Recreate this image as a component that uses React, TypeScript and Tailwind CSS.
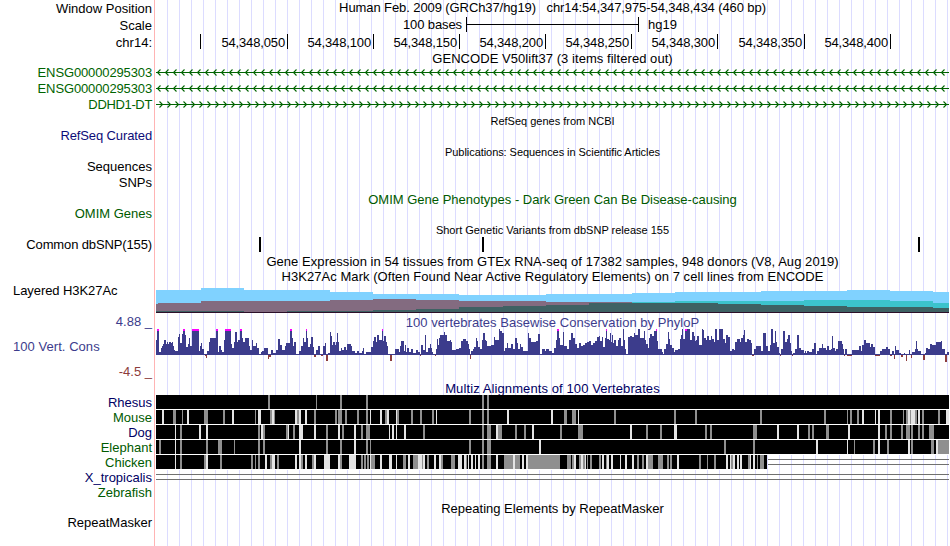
import React from 'react';

// every track is drawn in window pixels: the plot goes from x=156 to x=949
const LEFT = 156;
const WIDTH = 793;

type Run = [number, number];
type Mark = [number, number, string];

const ruler = ['54,348,050', '54,348,100', '54,348,150', '54,348,200', '54,348,250', '54,348,300', '54,348,350', '54,348,400'];
const rulerWidths = ['w-[87px]', 'w-[86px]', 'w-[86px]', 'w-[86px]', 'w-[86px]', 'w-[86px]', 'w-[87px]', 'w-[86px]'];

// [first x, top y] of each step, the step lasts until the next one
const h3k27ac: { color: string, steps: Run[] }[] = [
    { color: '#80d2ff', steps: [[156, 290], [201, 288], [244, 290], [330, 292], [373, 294], [459, 295], [546, 294], [632, 293], [675, 292], [761, 291], [847, 290], [890, 291], [933, 292]] },
    { color: '#3cc3cc', steps: [[156, 313], [632, 302], [675, 301], [804, 300], [890, 301], [933, 303]] },
    { color: '#836b80', steps: [[156, 304], [158, 303], [201, 301], [330, 300], [373, 299], [416, 300], [459, 301], [546, 302], [632, 313]] },
    { color: '#3e6163', steps: [[156, 311], [244, 312], [287, 311], [373, 310], [416, 309], [459, 307], [503, 306], [546, 305], [589, 303], [718, 304], [761, 305], [804, 306], [847, 307], [933, 308]] },
    { color: '#2c1028', steps: [[156, 312]] },
];

// x in thirds of a pixel from each block's origin, height in pixels; 27 is clipped at the top
const phyloP: { origin: number, runs: Run[] }[] = [
    {
        origin: 150,
        runs: [[18, 15], [21, 27], [27, 3], [33, 7], [36, 9], [39, 11], [42, 15], [48, 11], [51, 13], [54, 11], [57, 13], [63, 12], [66, 13], [69, 9], [72, 5], [75, 4], [84, 18], [87, 21], [90, 12], [96, 21], [99, 27], [105, 20], [108, 8], [114, 11], [117, 17], [120, 9], [126, 27], [147, 4], [150, 9], [153, 12], [156, 6], [162, 1], [165, -1], [168, -3], [171, 4], [177, 13], [180, 17], [198, 27], [204, 3], [207, 9], [213, 5], [216, 3], [222, 15], [225, 27], [243, 11], [246, 7], [252, 13], [255, 23], [261, 13], [264, 15], [270, 27], [276, 17], [279, 13], [285, 17], [297, 9], [300, 5], [306, 15], [309, 9], [318, 12], [321, 7], [327, 1], [333, 3], [336, 4], [342, 7], [354, -4], [357, -2], [363, 5], [369, 2], [378, 5], [384, 16], [390, 10], [396, 5], [405, 9], [408, 12], [420, 27], [426, 17], [429, 9], [432, 13], [438, 1], [447, 4], [453, 9], [459, 17], [462, 13], [468, 27], [471, 17], [474, 8], [480, 11], [483, 18], [489, 8], [492, -2], [498, 5], [504, 9], [510, 1], [513, -1], [519, 9], [525, 12], [528, -6], [534, 2], [540, 23], [543, 19], [546, 10], [549, 13], [555, 10], [558, 13], [561, 22], [564, 13], [567, 4], [573, 7], [576, 5], [582, 8], [588, 5], [591, 11], [603, 9], [606, 4], [615, 2], [621, 4], [627, 2], [636, 4], [639, 7], [642, 1], [648, 3], [663, 8], [669, 14], [672, 18], [678, 13], [681, 20], [687, 15], [696, 27], [699, 14], [702, 19], [708, 13], [711, 9], [714, 1], [720, -6], [726, 1], [735, 6], [747, 3], [750, 9], [753, 14], [762, 4], [765, 10], [768, 3], [771, 7], [777, 3], [783, 6], [789, 2], [798, 5], [804, 3]],
    },
    {
        origin: 420,
        runs: [[0, -1], [3, 10], [9, 5], [15, 20], [18, 3], [24, 7], [30, 11], [33, 7], [36, 3], [39, 1], [45, -1], [48, 6], [51, 16], [54, 10], [57, 17], [60, 20], [72, 23], [75, 20], [81, 14], [90, 15], [93, 13], [96, 5], [108, 6], [117, 7], [123, 14], [129, 16], [138, 14], [144, 11], [147, 6], [150, -4], [153, 4], [159, 6], [162, 8], [168, 17], [171, 14], [174, 8], [180, 6], [186, 15], [189, 22], [195, 15], [198, 14], [201, 9], [213, 10], [222, 18], [225, 15], [237, 26], [240, 24], [246, 22], [252, 4], [255, 7], [261, 12], [264, 7], [273, 11], [279, 6], [285, 17], [291, 12], [294, 6], [300, 11], [303, 8], [309, 4], [324, 22], [327, 17], [333, 13], [348, 14], [354, 21], [360, 1], [366, 6], [375, 4], [378, 6], [387, 4], [396, 2], [402, 7], [408, 15], [411, 27], [417, 17], [420, 10], [429, 23], [432, 9], [441, 6], [447, 15], [453, 22], [459, 17], [465, 11], [471, 7], [477, 12], [483, 9], [489, 10], [495, 12], [501, 13], [507, 14], [513, 10], [519, 12], [525, 14], [531, 18], [537, 19], [540, 14], [546, 18], [549, 8], [555, 17], [558, 27], [561, 16], [567, 15], [570, 22], [573, 13], [576, 20], [579, 12], [582, 15], [588, 9], [594, 15], [597, 17], [603, 9], [609, 26], [612, 15], [615, 6], [618, 1], [624, 18], [630, 19], [636, 18], [642, 22], [645, 20], [654, 26], [660, 17], [672, 24], [675, 15], [678, 11], [684, 7], [687, 17], [690, 21], [696, 19], [702, 24], [708, 27], [711, 14], [714, 6], [726, 3], [729, 1], [732, 6], [738, 11], [744, 23], [747, 16], [750, 10], [756, 7], [762, 3], [765, 5], [774, 6], [780, 16], [783, 20], [786, 26], [789, 16], [795, 27], [801, 26]],
    },
    {
        origin: 680,
        runs: [[21, 26], [30, 15], [36, 23], [42, 19], [45, 14], [48, 15], [51, 19], [57, 10], [66, 26], [69, 25], [72, 17], [78, 15], [81, 19], [87, 15], [93, 19], [96, 16], [102, 13], [105, 26], [111, 15], [117, 26], [129, 16], [135, 12], [138, 20], [144, 18], [150, 4], [156, 6], [162, 5], [165, 13], [171, 16], [180, 13], [183, 17], [189, 20], [192, 25], [195, 13], [201, 16], [207, 15], [213, 12], [216, -1], [222, 6], [228, 9], [243, 4], [249, 22], [258, 9], [264, 4], [270, 10], [273, 26], [279, 12], [285, 24], [288, 13], [291, 8], [297, 2], [300, -1], [303, 6], [309, 24], [315, 13], [321, 16], [324, 20], [330, 12], [333, 4], [336, -1], [339, 2], [345, 6], [351, 20], [357, 7], [363, 5], [372, 2], [375, 4], [378, 2], [381, 4], [387, 3], [396, 6], [402, 12], [408, 1], [411, 4], [417, 7], [426, 11], [429, 7], [438, 5], [441, 9], [447, 5], [453, 6], [456, 19], [459, 7], [465, 4], [468, 6], [474, 14], [486, 11], [489, 6], [492, -1], [495, 6], [501, -1], [516, 5], [537, 9], [543, 4], [546, 10], [552, 15], [558, 12], [570, 8], [573, 11], [579, 8], [585, -1], [600, 4], [606, 6], [618, 8], [624, 6], [630, -1], [636, 4], [642, -4], [645, 9], [648, 5], [657, 2], [663, -2], [669, 1], [672, 2], [675, 1], [678, -6], [681, 1], [687, 5], [690, 1], [693, -3], [696, 3], [705, 6], [708, 14], [711, 6], [714, 4], [723, 1], [729, -5], [735, 2], [738, 7], [744, 6], [750, 11], [756, 10], [768, 13], [783, 14], [786, 6], [795, -7], [801, 3], [807, 0]],
    },
];

const g = '#8f8f8f';
const w = '#e4e4e4';

// [x, width, shade] of every gap in a species' alignment
const species: { end: number, marks: Mark[] }[] = [
    { end: 949, marks: [[268, 2, g], [316, 1, g], [340, 2, g], [366, 2, g], [482, 2, g], [487, 2, g]] },
    {
        end: 949,
        marks: [[162, 2, w], [173, 3, g], [182, 1, g], [187, 2, w], [204, 4, g], [223, 2, g], [232, 2, w], [255, 1, g], [258, 3, w], [270, 2, g], [272, 2, w], [274, 1, g], [295, 2, w], [297, 2, g], [299, 2, w], [305, 2, w], [314, 2, g], [335, 2, g], [338, 4, g], [345, 2, g], [357, 2, g], [366, 2, g], [370, 1, w], [380, 2, w], [385, 2, g], [387, 2, w], [396, 1, w], [397, 2, g], [411, 2, g],
            [420, 2, g], [432, 2, g], [436, 1, w], [469, 2, g], [482, 2, g], [487, 2, g], [507, 2, w], [551, 2, w], [564, 3, g], [572, 4, g], [578, 1, w], [614, 2, g], [674, 2, g],
            [695, 2, g], [760, 2, g], [824, 2, g], [847, 1, g], [850, 2, g], [857, 2, g], [862, 2, w], [875, 1, w], [878, 2, w], [890, 2, g], [903, 1, g], [906, 2, g], [908, 2, w], [910, 1, g], [911, 4, w], [915, 2, g], [918, 2, w], [922, 2, g], [938, 2, g], [946, 3, w]],
    },
    {
        end: 949,
        marks: [[175, 1, w], [180, 2, g], [199, 2, w], [206, 2, w], [258, 2, g], [261, 2, w], [263, 2, g], [286, 2, g], [288, 1, w], [293, 2, g], [299, 4, w], [314, 2, w], [326, 2, g], [338, 2, w], [342, 2, g], [354, 2, w], [361, 2, g], [366, 4, g], [389, 1, w], [392, 2, w], [396, 1, w], [404, 2, w],
            [423, 2, g], [482, 2, g], [487, 4, g], [496, 2, w], [498, 4, g], [515, 2, g], [524, 2, g], [532, 2, w], [560, 2, g], [578, 5, g], [630, 2, w], [646, 2, g], [660, 2, g], [674, 3, w],
            [705, 2, g], [710, 2, g], [753, 4, g], [777, 2, w], [797, 2, w], [808, 2, g], [812, 2, g], [826, 3, g], [848, 2, w], [878, 2, w], [885, 2, g], [890, 2, g], [901, 2, g], [906, 4, g], [911, 2, g], [918, 2, g], [922, 2, g], [929, 5, g]],
    },
    {
        end: 949,
        marks: [[159, 2, g], [175, 1, w], [180, 2, g], [206, 2, g], [218, 4, g], [234, 1, g], [258, 2, g], [263, 2, g], [299, 2, w], [326, 2, g], [340, 2, g], [354, 2, w], [366, 2, g], [370, 1, g],
            [469, 2, g], [482, 2, g], [487, 4, g], [539, 2, w],
            [724, 2, g], [753, 2, g], [816, 2, w], [847, 1, w], [854, 1, g], [873, 2, g], [878, 2, w], [887, 2, g], [908, 2, w], [911, 2, g], [931, 3, g], [936, 2, w], [938, 11, g]],
    },
    {
        end: 767,
        marks: [[175, 1, w], [180, 2, g], [204, 2, g], [206, 2, w], [220, 2, g], [251, 2, g], [255, 1, g], [258, 2, g], [265, 2, w], [270, 2, g], [272, 3, w], [277, 2, g], [295, 2, w], [299, 2, w], [301, 2, g], [305, 2, w], [312, 2, g], [314, 2, w], [324, 6, w], [338, 2, w], [340, 2, g], [349, 7, w], [361, 2, g], [364, 2, g], [367, 2, g], [370, 1, w], [371, 4, g], [380, 2, w], [389, 3, w], [396, 1, w], [403, 3, g], [408, 2, w], [413, 5, g],
            [418, 4, w], [422, 1, g], [423, 2, w], [427, 2, g], [434, 2, w], [439, 2, w], [441, 2, g], [451, 4, g], [458, 4, w], [464, 2, w], [466, 1, g], [468, 1, w], [471, 2, w], [475, 1, w], [478, 2, w], [482, 2, g], [487, 4, g], [496, 2, w], [504, 9, g], [513, 2, w], [515, 5, g], [522, 2, w], [526, 2, w], [528, 32, g], [567, 4, g], [572, 2, g], [574, 2, w], [579, 2, g], [581, 2, w], [583, 2, g], [585, 1, w], [587, 1, g], [590, 2, g], [599, 2, g], [602, 2, w], [606, 1, g], [607, 2, w], [611, 2, w], [620, 1, w], [625, 2, w], [632, 2, w], [637, 2, g], [642, 2, g], [646, 2, w], [648, 5, g], [658, 5, g], [667, 2, g], [670, 2, g], [677, 2, w],
            [699, 2, g], [707, 1, g], [714, 2, g], [726, 2, w], [730, 1, w], [731, 2, g], [733, 2, w], [737, 2, w], [740, 2, w], [748, 2, g], [750, 1, w], [753, 2, w], [757, 1, g], [760, 4, g]],
    },
    { end: 156, marks: [] },
];

const Plot = (props: { top: number, height: number, children: React.ReactNode }) =>
    <svg className="block shrink-0" width={WIDTH} height={props.height} viewBox={`${LEFT} ${props.top} ${WIDTH} ${props.height}`} shapeRendering="crispEdges">
        {props.children}
    </svg>;

const Label = (props: { children?: React.ReactNode, className: string }) =>
    <div className={'shrink-0 pr-[2px] text-right whitespace-pre ' + props.className}>{props.children}</div>;

const Title = (props: { children: React.ReactNode, className: string }) =>
    <div className={'shrink-0 text-center whitespace-pre ' + props.className}>{props.children}</div>;

const Gene = (props: { reverse?: boolean }) =>
    <Plot top={0} height={16}>
        <rect x={156} y={7} width={793} height={1} fill="#006400" />
        {Array.from({ length: 99 }, (_, i) => (
            <path
                key={i}
                d={props.reverse ? `M${160.5 + i * 8} 4.5l-3 3l3 3` : `M${159.5 + i * 8} 4.5l3 3l-3 3`}
                fill="none"
                stroke="#006400"
                strokeWidth={1.1}
                shapeRendering="auto"
            />
        ))}
    </Plot>;

const H3k27ac = () =>
    <Plot top={283} height={31}>
        {h3k27ac.map(layer => layer.steps.map(([x, y], i) => (
            <rect key={layer.color + x} x={x} y={y} width={(layer.steps[i + 1]?.[0] ?? 949) - x} height={313 - y} fill={layer.color} />
        )))}
    </Plot>;

const PhyloP = () => {
    const bars = phyloP.flatMap(block => block.runs.map(([x, h]): Run => [block.origin + x / 3, h]));
    return <Plot top={329} height={53}>
        {bars.map(([x, h], i) => {
            const width = (bars[i + 1]?.[0] ?? x) - x;
            if (h < 0) {
                return <rect key={i} x={x} y={355} width={width} height={-h} fill="#8c3c3c" />;
            }
            return <rect key={i} x={x} y={355 - Math.min(h, 26)} width={width} height={Math.min(h, 26)} fill="#3c3c8c" />;
        })}
        {bars.map(([x, h], i) => h === 27 && <rect key={i} x={x} y={329} width={bars[i + 1][0] - x} height={2} fill="#ff00ff" />)}
        <rect x={156} y={354} width={793} height={1} fill="#3c3c8c" />
    </Plot>;
};

const Multiz = () =>
    <Plot top={395} height={105}>
        {species.map((s, row) => (
            <g key={row} transform={`translate(0 ${395 + row * 15})`}>
                {s.end > 156 && <rect x={156} y={0} width={s.end - 156} height={15} fill="#fff" />}
                <rect x={156} y={0} width={s.end - 156} height={14} fill="#000" />
                {s.marks.map(([x, width, fill], i) => <rect key={i} x={x} y={0} width={width} height={14} fill={fill} />)}
                {s.end < 949 && [4, 9].map(y => <rect key={y} x={s.end + (row === 4 ? 1 : 0)} y={y} width={949 - s.end} height={1} fill="#707070" />)}
            </g>
        ))}
    </Plot>;

export default function App() {
    return (
        <div className="flex h-[546px] w-[950px] overflow-hidden bg-white font-['Liberation_Sans',Arial,sans-serif] text-[13px] text-black">
            <div className="flex w-[155px] shrink-0 flex-col border-r border-[#ffb4b4] leading-[15px]">
                <Label className="h-[17px] leading-[17px]">Window Position</Label>
                <Label className="h-[17px] leading-[17px]">Scale</Label>
                <Label className="mb-[14px] h-[17px] leading-[17px]">chr14:</Label>
                <Label className="h-4 tracking-[-0.13px] text-[#006400]">ENSG00000295303</Label>
                <Label className="h-4 tracking-[-0.13px] text-[#006400]">ENSG00000295303</Label>
                <Label className="h-4 tracking-[-0.35px] text-[#006400]">DDHD1-DT</Label>
                <Label className="mt-[15px] h-4 tracking-[-0.12px] text-[#0c0c78]">RefSeq Curated</Label>
                <Label className="mt-[15px] h-4">Sequences</Label>
                <Label className="h-4">SNPs</Label>
                <Label className="mt-[15px] h-4 text-[#005a00]">OMIM Genes</Label>
                <Label className="mt-[15px] h-4 tracking-[-0.13px]">Common dbSNP(155)</Label>
                <div className="mt-[30px] h-4 pl-[13px] tracking-[-0.07px]">Layered H3K27Ac</div>
                <Label className="mt-[15px] h-[25px] text-[#3c3c8c]">4.88 _</Label>
                <div className="h-[25px] pl-[13px] tracking-[0.05px] text-[#3c3c8c]">100 Vert. Cons</div>
                <Label className="mb-[15px] h-4 text-[#8c3c3c]">-4.5 _</Label>
                <Label className="h-[15px] text-[#000064]">Rhesus</Label>
                <Label className="h-[15px] text-[#005a00]">Mouse</Label>
                <Label className="h-[15px] text-[#000064]">Dog</Label>
                <Label className="h-[15px] text-[#005a00]">Elephant</Label>
                <Label className="h-[15px] text-[#005a00]">Chicken</Label>
                <Label className="h-[15px] text-[#000064]">X_tropicalis</Label>
                <Label className="mb-[15px] h-[15px] text-[#005a00]">Zebrafish</Label>
                <Label className="h-4">RepeatMasker</Label>
            </div>
            <div className="ml-px flex w-[793px] shrink-0 flex-col bg-[repeating-linear-gradient(to_right,transparent_0_11px,#dcdcff_11px_12px)]">
                <Title className="h-[17px] leading-[15px] tracking-[-0.09px]">Human Feb. 2009 (GRCh37/hg19)   chr14:54,347,975-54,348,434 (460 bp)</Title>
                <div className="flex h-[17px] shrink-0 leading-[15px]">
                    <div className="w-[310px] pr-1 text-right tracking-[-0.1px]">100 bases</div>
                    <div className="flex h-[15px] w-[173px] items-center border-x border-black">
                        <div className="h-px w-full bg-black" />
                    </div>
                    <div className="pl-[9px]">hg19</div>
                </div>
                <div className="flex h-[17px] shrink-0 leading-[17px] tracking-[-0.15px]">
                    <div className="h-[15px] w-[45px] border-r border-black" />
                    {ruler.map((position, i) => (
                        <div className={'h-[15px] border-r border-black pr-[2px] text-right ' + rulerWidths[i]} key={position}>{position}</div>
                    ))}
                </div>
                <Title className="h-[14px] leading-[15px] tracking-[0.05px]">GENCODE V50lift37 (3 items filtered out)</Title>
                <Gene reverse />
                <Gene reverse />
                <Gene />
                <Title className="h-[31px] text-[11px] leading-[17px]">RefSeq genes from NCBI</Title>
                <Title className="h-[47px] text-[11px] leading-[17px] tracking-[-0.06px]">Publications: Sequences in Scientific Articles</Title>
                <Title className="h-[31px] leading-[17px] text-[#005a00]">OMIM Gene Phenotypes - Dark Green Can Be Disease-causing</Title>
                <Title className="h-[15px] text-[11px] leading-[17px]">Short Genetic Variants from dbSNP release 155</Title>
                <Plot top={237} height={16}>
                    {[259, 482, 918].map(x => <rect key={x} x={x} y={237} width={2} height={15} />)}
                </Plot>
                <Title className="h-[15px] leading-[17px] tracking-[0.055px]">Gene Expression in 54 tissues from GTEx RNA-seq of 17382 samples, 948 donors (V8, Aug 2019)</Title>
                <Title className="h-[15px] leading-[17px] tracking-[0.05px]">H3K27Ac Mark (Often Found Near Active Regulatory Elements) on 7 cell lines from ENCODE</Title>
                <H3k27ac />
                <Title className="h-[15px] leading-[17px] tracking-[0.03px] text-[#3c3c8c]">100 vertebrates Basewise Conservation by PhyloP</Title>
                <PhyloP />
                <Title className="h-[13px] leading-[13px] tracking-[0.1px] text-[#000064]">Multiz Alignments of 100 Vertebrates</Title>
                <Multiz />
                <Title className="h-[46px] leading-[17px]">Repeating Elements by RepeatMasker</Title>
            </div>
        </div>
    );
}
